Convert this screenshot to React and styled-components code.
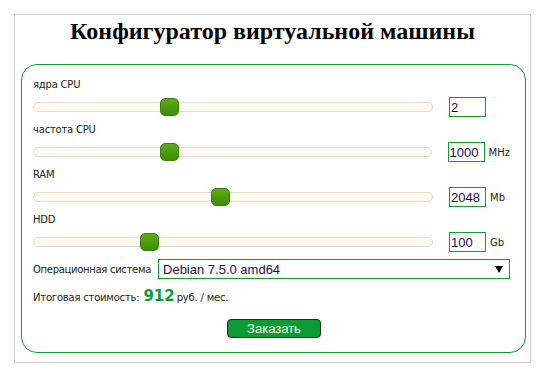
import React from 'react';
import styled, { createGlobalStyle } from 'styled-components';

const GlobalStyle = createGlobalStyle`
  body {
    margin: 0;
    background: #fff;
    font-family: "DejaVu Sans", Verdana, sans-serif;
  }
`;

const green = '#14993a';

const Page = styled.div`
  padding: 14px;
`;

const Frame = styled.div`
  width: 515px;
  height: 345px;
  border: 1px solid #cccccc;
  box-sizing: content-box;
  padding-top: 2px;
`;

const Title = styled.h1`
  margin: 0;
  font-family: "Liberation Serif", "Times New Roman", serif;
  font-weight: bold;
  font-size: 24px;
  line-height: 28px;
  text-align: center;
  color: #000;
`;

const Panel = styled.div`
  margin: 19px 4px 0 6px;
  height: 289px;
  box-sizing: border-box;
  border: 1px solid ${green};
  border-radius: 16px;
  padding: 14px 15px 0 11px;
`;

const Label = styled.div`
  font-size: 10px;
  line-height: 12px;
  letter-spacing: -0.2px;
  color: #222;
  margin-bottom: 6px;
`;

const Row = styled.div`
  display: flex;
  align-items: center;
  height: 20px;
  margin-bottom: 7px;
`;

const Track = styled.div`
  position: relative;
  width: 400px;
  height: 10px;
  box-sizing: border-box;
  background: #fdfaf2;
  border: 1px solid #e4dcc8;
  border-radius: 5px;
  margin-right: 16px;
`;

const Handle = styled.div`
  position: absolute;
  top: -5px;
  width: 19px;
  height: 18px;
  box-sizing: border-box;
  border: 1px solid #3c7d0c;
  border-radius: 5px;
  background: linear-gradient(#5cad18, #3f8c02);
`;

const ValueInput = styled.input`
  width: 37px;
  height: 20px;
  box-sizing: border-box;
  border: 1px solid ${green};
  padding: 0 1px;
  margin: 0;
  font-family: "Liberation Sans", Arial, sans-serif;
  font-size: 13px;
  color: #1d0b4d;
  outline: none;
`;

const Unit = styled.span`
  font-size: 10px;
  color: #222;
  margin-left: 4px;
`;

const OsRow = styled.div`
  display: flex;
  align-items: center;
  margin-top: 1px;
  margin-bottom: 8px;
`;

const OsLabel = styled.span`
  font-size: 10px;
  letter-spacing: -0.3px;
  color: #222;
  margin-right: 7px;
`;

const Select = styled.div`
  flex: 1;
  height: 20px;
  box-sizing: border-box;
  border: 1px solid ${green};
  display: flex;
  align-items: center;
  justify-content: space-between;
  padding: 0 6px 0 4px;
  font-family: "Liberation Sans", Arial, sans-serif;
  font-size: 13px;
  color: #1d0b4d;
`;

const Total = styled.div`
  display: flex;
  align-items: baseline;
  font-size: 10px;
  letter-spacing: -0.2px;
  color: #222;
  line-height: 18px;
`;

const Price = styled.span`
  font-size: 15px;
  font-weight: bold;
  letter-spacing: 0;
  color: #0f9a3a;
  margin: 0 2px 0 4px;
`;

const Actions = styled.div`
  display: flex;
  justify-content: center;
  margin-top: 12px;
  padding-left: 5px;
`;

const OrderButton = styled.button`
  width: 94px;
  height: 19px;
  padding: 0;
  border: 1px solid #1d2a1d;
  border-radius: 4px;
  background: #0b9b35;
  color: #fff;
  font-family: "Liberation Sans", Arial, sans-serif;
  font-size: 13px;
  line-height: 17px;
  cursor: pointer;
`;

const sliders = [
  { label: 'ядра CPU', value: 2, min: 1, max: 4, unit: '' },
  { label: 'частота CPU', value: 1000, min: 500, max: 2000, unit: 'MHz' },
  { label: 'RAM', value: 2048, min: 256, max: 4096, unit: 'Mb' },
  { label: 'HDD', value: 100, min: 10, max: 330, unit: 'Gb' },
];

const Slider = ({ label, value, min, max, unit }) => {
  const left = ((value - min) / (max - min)) * 381;
  return (
    <>
      <Label>{label}</Label>
      <Row>
        <Track>
          <Handle style={{ left: left - 1 }} />
        </Track>
        <ValueInput value={value} readOnly />
        {unit && <Unit>{unit}</Unit>}
      </Row>
    </>
  );
};

const App = () => (
  <Page>
    <GlobalStyle />
    <Frame>
      <Title>Конфигуратор виртуальной машины</Title>
      <Panel>
        {sliders.map((s) => (
          <Slider key={s.label} {...s} />
        ))}
        <OsRow>
          <OsLabel>Операционная система</OsLabel>
          <Select>
            <span>Debian 7.5.0 amd64</span>
            <svg width="8" height="7" viewBox="0 0 8 7">
              <path d="M0 0H8L4 7Z" fill="#000" />
            </svg>
          </Select>
        </OsRow>
        <Total>
          Итоговая стоимость:<Price>912</Price>руб. / мес.
        </Total>
        <Actions>
          <OrderButton>Заказать</OrderButton>
        </Actions>
      </Panel>
    </Frame>
  </Page>
);

export default App;
